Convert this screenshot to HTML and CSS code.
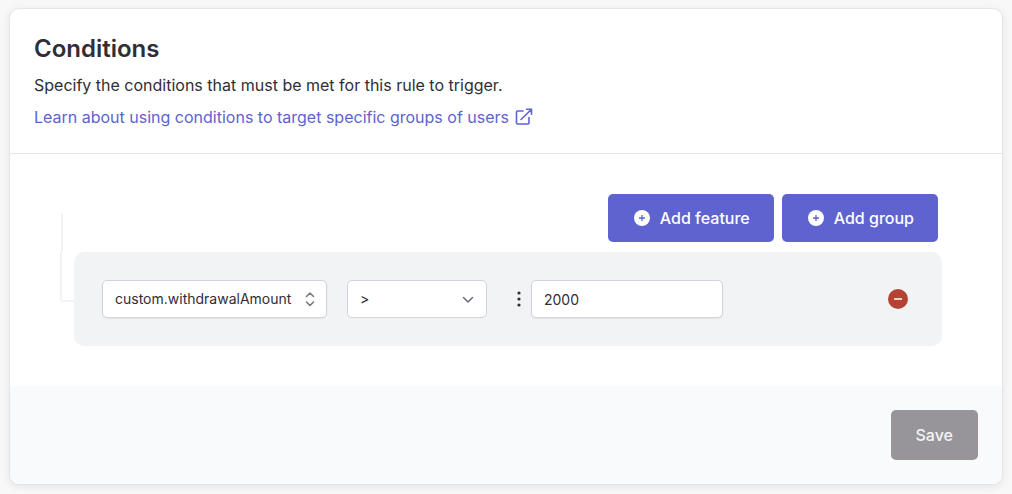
FILE: index.html
```html
<!DOCTYPE html>
<html lang="en">
<head>
    <meta charset="UTF-8">
    <meta name="viewport" content="width=device-width, initial-scale=1.0">
    <title>Conditions</title>
    <link rel="stylesheet" href="styles.css">
</head>
<body>
    <form class="card">
        <header class="card-header">
            <h2>Conditions</h2>
            <p>Specify the conditions that must be met for this rule to trigger.</p>
            <a class="learn-link" href="#">
                Learn about using conditions to target specific groups of users
                <svg viewBox="0 0 18 18" width="18" height="18" fill="none" stroke="currentColor" stroke-width="1.6" stroke-linecap="round" stroke-linejoin="round" aria-hidden="true">
                    <path d="M8 3H2.500a1 1 0 0 0-1 1v11a1 1 0 0 0 1 1h10.500a1 1 0 0 0 1-1V9.500"/>
                    <path d="M6 11.500L16.500 1.200M11.500 1.200h5v5"/>
                </svg>
            </a>
        </header>

        <div class="card-body">
            <div class="actions">
                <button type="button" class="btn btn-primary">
                    <svg viewBox="0 0 16 16" width="16" height="16" aria-hidden="true">
                        <circle cx="8" cy="8" r="8" fill="#fff"/>
                        <path d="M8 5v6M5 8h6" stroke="#5e63d0" stroke-width="1.3"/>
                    </svg>
                    Add feature
                </button>
                <button type="button" class="btn btn-primary">
                    <svg viewBox="0 0 16 16" width="16" height="16" aria-hidden="true">
                        <circle cx="8" cy="8" r="8" fill="#fff"/>
                        <path d="M8 5v6M5 8h6" stroke="#5e63d0" stroke-width="1.3"/>
                    </svg>
                    Add group
                </button>
            </div>

            <div class="condition">
                <div class="select select-feature">
                    <select aria-label="Feature">
                        <option>custom.withdrawalAmount</option>
                    </select>
                    <svg viewBox="0 0 20 20" width="20" height="20" fill="none" stroke="#797981" stroke-width="1.6" stroke-linecap="round" stroke-linejoin="round" aria-hidden="true">
                        <path d="M6.500 7.500L10 4l3.500 3.500M6.500 13l3.500 3.500 3.500-3.500"/>
                    </svg>
                </div>
                <div class="select select-operator">
                    <select aria-label="Operator">
                        <option>&gt;</option>
                    </select>
                    <svg viewBox="0 0 20 20" width="20" height="20" fill="none" stroke="#6b7080" stroke-width="1.6" stroke-linecap="round" stroke-linejoin="round" aria-hidden="true">
                        <path d="M5.500 8.500L10 13l4.500-4.500"/>
                    </svg>
                </div>
                <div class="value">
                    <button type="button" class="icon-btn" aria-label="Value options">
                        <svg viewBox="0 0 4 16" width="4" height="16" fill="#2f2e37" aria-hidden="true">
                            <circle cx="2" cy="2" r="1.600"/>
                            <circle cx="2" cy="8" r="1.600"/>
                            <circle cx="2" cy="14" r="1.600"/>
                        </svg>
                    </button>
                    <input type="text" value="2000" aria-label="Value">
                </div>
                <button type="button" class="icon-btn remove" aria-label="Remove condition">
                    <svg viewBox="0 0 20 20" width="20" height="20" aria-hidden="true">
                        <circle cx="10" cy="10" r="10" fill="#b54334"/>
                        <path d="M6 10h8" stroke="#ecd0cc" stroke-width="2"/>
                    </svg>
                </button>
            </div>
        </div>

        <footer class="card-footer">
            <button type="submit" class="btn btn-save" disabled>Save</button>
        </footer>
    </form>
</body>
</html>
```
FILE: styles.css
```css
* {
    box-sizing: border-box;
}
body {
    margin: 0;
    padding: 8px 9px;
    background: #f8f8f8;
    color: #2f2e37;
    font-family: Inter, sans-serif;
    font-size: 16px;
    line-height: 24px;
}
button, input, select {
    font: inherit;
    color: inherit;
}
.card {
    background: #fff;
    border: 1px solid #e4e5e8;
    border-radius: 10px;
    box-shadow: 0 2px 10px rgba(0, 0, 0, 0.08);
    overflow: hidden;
}

/* Header */
.card-header {
    padding: 24px;
    border-bottom: 1px solid #e4e5e8;
}
h2 {
    margin: 0 0 8px;
    font-size: 24px;
    line-height: 32px;
    font-weight: 600;
}
p {
    margin: 0 0 8px;
}
.learn-link {
    display: flex;
    align-items: center;
    gap: 6px;
    color: #5e63d0;
    text-decoration: none;
}

/* Body */
.card-body {
    padding: 40px 60px 40px 64px;
}
.actions {
    display: flex;
    justify-content: flex-end;
    gap: 8px;
    padding: 0 4px 10px 0;
}
.btn {
    display: flex;
    align-items: center;
    gap: 10px;
    border: none;
    border-radius: 5px;
    color: #fff;
    font-weight: 500;
    cursor: pointer;
}
.btn-primary {
    padding: 12px 24px 12px 26px;
    background: #5e63d0;
}
.condition {
    position: relative;
    display: flex;
    align-items: center;
    padding: 28px 34px 28px 28px;
    border-radius: 10px;
    background: #f2f3f5;
    font-size: 14px;
    line-height: 20px;
}
/* Tree lines that tie the condition to its group */
.condition::before,
.condition::after {
    content: "";
    position: absolute;
    border-left: 2px solid #f2f2f3;
}
.condition::before {
    top: -38px;
    left: -13px;
    height: 38px;
}
.condition::after {
    top: -1px;
    left: -14px;
    width: 13px;
    height: 49px;
    border-bottom: 2px solid #f2f2f3;
    border-bottom-left-radius: 3px;
}
.select {
    display: grid;
    align-items: center;
    margin-right: 20px;
}
.select select,
.select svg {
    grid-area: 1 / 1;
}
.select svg {
    justify-self: end;
    pointer-events: none;
}
.select-feature {
    width: 225px;
}
.select-feature svg {
    margin-right: 7px;
}
.select-operator {
    width: 140px;
    margin-right: 28px;
}
.select-operator svg {
    margin-right: 9px;
}
select, input {
    width: 100%;
    height: 38px;
    padding: 0 12px;
    border: 1px solid #d1d2dc;
    border-radius: 5px;
    background: #fff;
    appearance: none;
}
.select-feature select, input {
    box-shadow: 0 1px 2px rgba(0, 0, 0, 0.06);
}
.value {
    display: flex;
    align-items: center;
    gap: 10px;
}
.value input {
    width: 192px;
}
.icon-btn {
    display: flex;
    padding: 0;
    border: none;
    background: none;
    cursor: pointer;
}
.value .icon-btn {
    padding: 0 0 0 2px;
}
.remove {
    margin-left: auto;
}

/* Footer */
.card-footer {
    display: flex;
    justify-content: flex-end;
    padding: 24px;
    background: #f9fafc;
}
.btn-save {
    padding: 13px 25px;
    background: #97959a;
    color: #f4f4f5;
    cursor: default;
}
```
